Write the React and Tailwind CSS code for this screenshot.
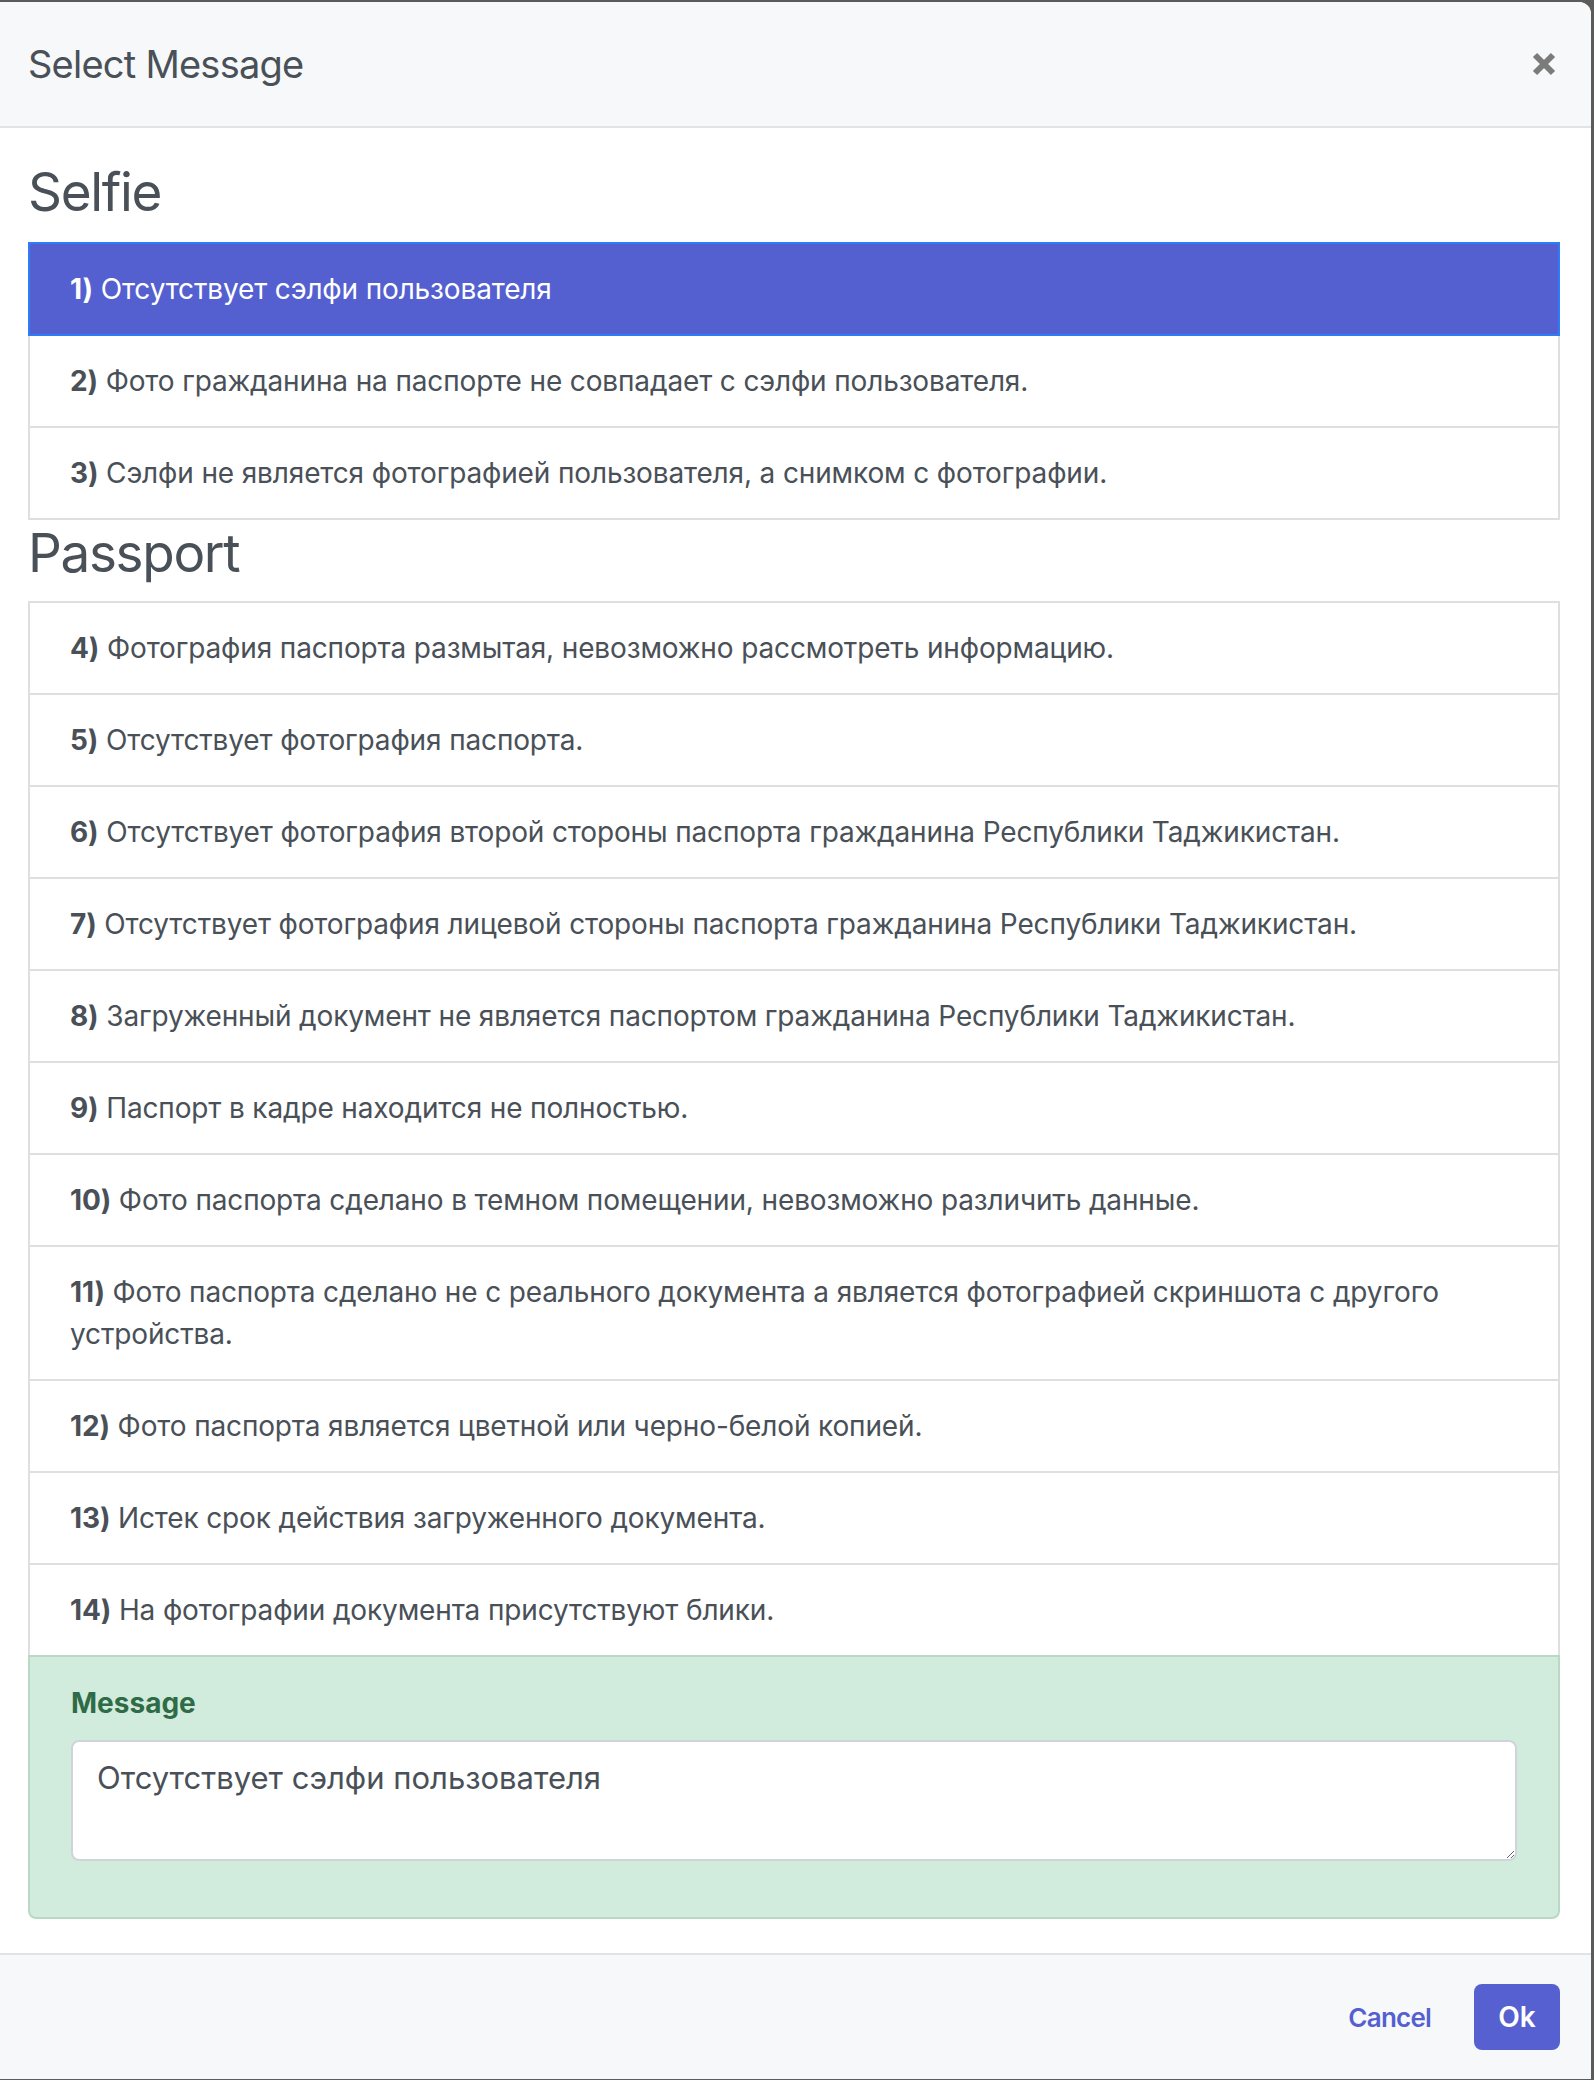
import React from "react";

const selfie = [
  "Отсутствует сэлфи пользователя",
  "Фото гражданина на паспорте не совпадает с сэлфи пользователя.",
  "Сэлфи не является фотографией пользователя, а снимком с фотографии.",
];

const passport = [
  "Фотография паспорта размытая, невозможно рассмотреть информацию.",
  "Отсутствует фотография паспорта.",
  "Отсутствует фотография второй стороны паспорта гражданина Республики Таджикистан.",
  "Отсутствует фотография лицевой стороны паспорта гражданина Республики Таджикистан.",
  "Загруженный документ не является паспортом гражданина Республики Таджикистан.",
  "Паспорт в кадре находится не полностью.",
  "Фото паспорта сделано в темном помещении, невозможно различить данные.",
  "Фото паспорта сделано не с реального документа а является фотографией скриншота с другого устройства.",
  "Фото паспорта является цветной или черно-белой копией.",
  "Истек срок действия загруженного документа.",
  "На фотографии документа присутствуют блики.",
];

const Item = ({ num, text, active, first }) => (
  <div
    className={`px-[40px] py-[24px] text-[28px] leading-[42px] tracking-[-0.005em] border-2 ${
      first ? "" : "-mt-[2px]"
    } ${
      active
        ? "relative z-10 bg-[#5560d0] border-[#2f7cf6] text-white"
        : "bg-white border-[#dfdfdf] text-[#495057]"
    }`}
  >
    <b className="font-bold">{num})</b> {text}
  </div>
);

const App = () => {
  const selected = 1;

  return (
    <div className="min-h-screen bg-[#5b5b5b] pt-[2px] font-['Inter',sans-serif]">
      <div className="w-[1591px] bg-white rounded-tr-[12px] overflow-hidden">
        {/* Header */}
        <div className="h-[126px] bg-[#f7f8fa] border-b-2 border-[#e1e3e8] flex items-center justify-between pl-[28px] pr-[35px]">
          <h5 className="text-[38px] leading-[60px] tracking-[-0.02em] text-[#495057]">Select Message</h5>
          <svg width="24" height="24" viewBox="0 0 24 24">
            <path d="M3 3 L21 21 M21 3 L3 21" stroke="#7b7b7b" strokeWidth="6" />
          </svg>
        </div>

        {/* Body */}
        <div className="pt-[31px] pl-[28px] pr-[31px] pb-[34px]">
          <h3 className="text-[53px] leading-[67px] tracking-[-0.025em] mb-[16px] text-[#495057]">Selfie</h3>
          <div>
            {selfie.map((t, i) => (
              <Item key={i} num={i + 1} text={t} active={i + 1 === selected} first={i === 0} />
            ))}
          </div>

          <h3 className="text-[53px] leading-[67px] tracking-[-0.025em] mb-[14px] text-[#495057]">Passport</h3>
          <div>
            {passport.map((t, i) => (
              <Item key={i} num={i + 4} text={t} active={i + 4 === selected} first={i === 0} />
            ))}
            <div className="-mt-[2px] relative z-10 bg-[#d1ecdc] border-2 border-[#b9d9c6] rounded-b-[8px] px-[41px] pt-[25px] pb-[56px]">
              <label className="block text-[28px] leading-[42px] font-bold text-[#2e6b46] mb-[16px]">
                Message
              </label>
              <textarea
                readOnly
                defaultValue={selfie[0]}
                className="block w-full h-[121px] bg-white border-2 border-[#ced4da] rounded-[8px] px-[24px] py-[12px] text-[31px] leading-[48px] text-[#495057] outline-none resize-y"
              />
            </div>
          </div>
        </div>

        {/* Footer */}
        <div className="h-[126px] bg-[#f7f8fa] border-t-2 border-[#e1e3e8] flex items-center justify-end gap-[43px] pr-[31px]">
          <button className="text-[26px] font-semibold tracking-[-0.03em] text-[#5560d0]">Cancel</button>
          <button className="w-[86px] h-[66px] rounded-[8px] bg-[#5660d0] text-white text-[28px] font-semibold">
            Ok
          </button>
        </div>
      </div>
    </div>
  );
};

export default App;
